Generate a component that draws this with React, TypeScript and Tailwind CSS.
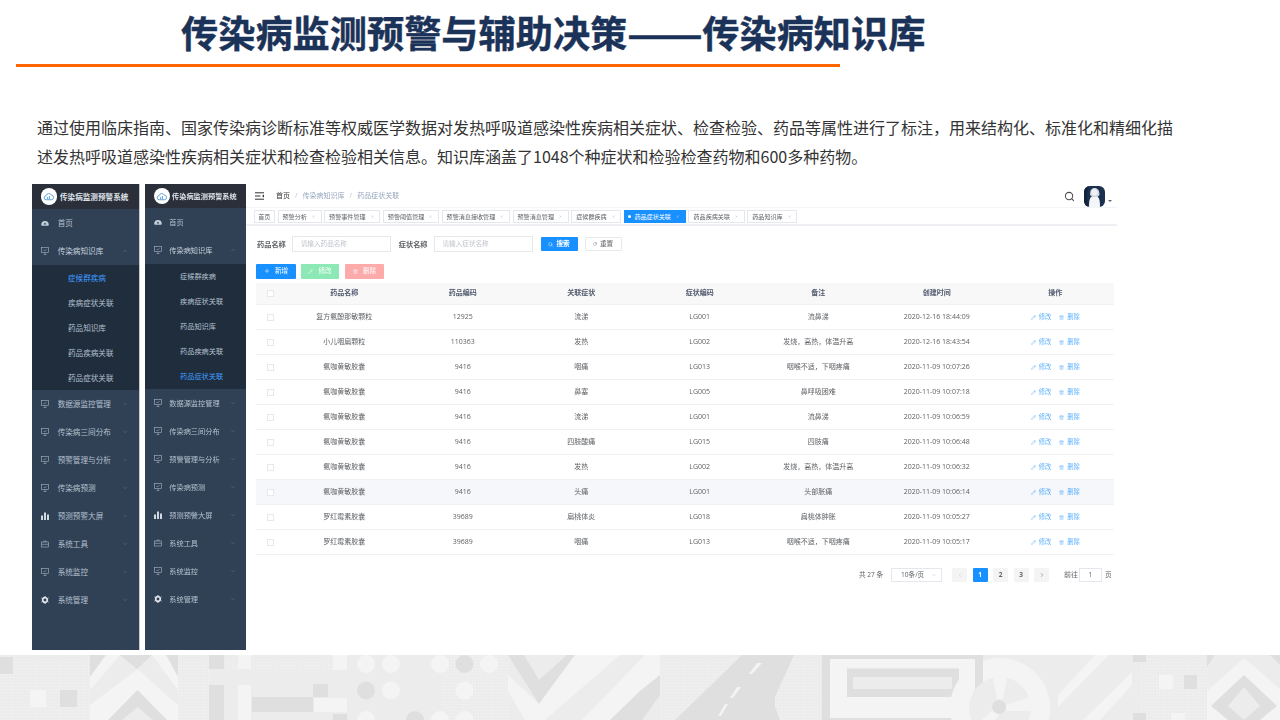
import { ChevronDown, ChevronLeft, ChevronRight, ChevronUp, Pencil, Plus, RotateCw, Search, Trash2, X } from 'lucide-react';

const menuItems = [
  { label: '数据源监控管理', icon: 'monitor' },
  { label: '传染病三间分布', icon: 'monitor' },
  { label: '预警管理与分析', icon: 'monitor' },
  { label: '传染病预测', icon: 'monitor' },
  { label: '预测预警大屏', icon: 'chart' },
  { label: '系统工具', icon: 'tool' },
  { label: '系统监控', icon: 'monitor' },
  { label: '系统管理', icon: 'gear' },
];

const children = ['症候群疾病', '疾病症状关联', '药品知识库', '药品疾病关联', '药品症状关联'];

const tags = ['预警分析', '预警事件管理', '预警阈值管理', '预警消息接收管理', '预警消息管理', '症候群疾病'];

const rows = [
  ['复方氨酚那敏颗粒', '12925', '流涕', 'LG001', '流鼻涕', '2020-12-16 18:44:09'],
  ['小儿咽扁颗粒', '110363', '发热', 'LG002', '发烧，高热，体温升高', '2020-12-16 18:43:54'],
  ['氨咖黄敏胶囊', '9416', '咽痛', 'LG013', '咽喉不适，下咽疼痛', '2020-11-09 10:07:26'],
  ['氨咖黄敏胶囊', '9416', '鼻塞', 'LG005', '鼻呼吸困难', '2020-11-09 10:07:18'],
  ['氨咖黄敏胶囊', '9416', '流涕', 'LG001', '流鼻涕', '2020-11-09 10:06:59'],
  ['氨咖黄敏胶囊', '9416', '四肢酸痛', 'LG015', '四肢痛', '2020-11-09 10:06:48'],
  ['氨咖黄敏胶囊', '9416', '发热', 'LG002', '发烧，高热，体温升高', '2020-11-09 10:06:32'],
  ['氨咖黄敏胶囊', '9416', '头痛', 'LG001', '头部胀痛', '2020-11-09 10:06:14'],
  ['罗红霉素胶囊', '39689', '扁桃体炎', 'LG018', '扁桃体肿胀', '2020-11-09 10:05:27'],
  ['罗红霉素胶囊', '39689', '咽痛', 'LG013', '咽喉不适，下咽疼痛', '2020-11-09 10:05:17'],
];

function MenuIcon({ name }: { name: string }) {
  if (name === 'chart') {
    return (
      <svg width="8" height="8" viewBox="0 0 8 8" fill="#d0d8e2">
        <rect x="0" y="3.500" width="2" height="4.500" />
        <rect x="3" y="0.500" width="2" height="7.500" />
        <rect x="6" y="2.500" width="2" height="5.500" />
      </svg>
    );
  }
  if (name === 'tool') {
    return (
      <svg width="8" height="8" viewBox="0 0 8 8" fill="none" stroke="#aab6c5" strokeWidth="0.6">
        <rect x="0.500" y="2" width="7" height="5" />
        <path d="M2.800 2V1h2.400v1M0.500 4.300h7" />
      </svg>
    );
  }
  if (name === 'gear') {
    return (
      <svg width="8" height="8" viewBox="0 0 8 8" fill="none" stroke="#dfe5ec">
        <circle cx="4" cy="4" r="2.300" strokeWidth="1.700" />
        <path d="M4 0v1M4 7v1M.5 2l.9.5M6.600 5.500l.9.5M.5 6l.9-.5M6.600 2.500l.9-.5" strokeWidth="1" />
      </svg>
    );
  }
  if (name === 'home') {
    return (
      <svg width="8" height="8" viewBox="0 0 8 8" fill="#bfcbd9">
        <path d="M0.200 5.800a3.800 3.800 0 1 1 7.600 0c0 .6-.3.9-.8.9H1c-.5 0-.8-.3-.8-.9z" />
        <circle cx="4" cy="4.800" r="0.900" fill="#304156" />
      </svg>
    );
  }
  return (
    <svg width="8" height="8" viewBox="0 0 8 8" fill="none" stroke="#aab6c5" strokeWidth="0.6">
      <rect x="0.400" y="0.400" width="7.200" height="5.200" />
      <path d="M2.500 7.600h3M4 5.600v2M2.600 3l1 1 1.800-1.800" />
    </svg>
  );
}

function SidebarRow({ icon, label, open, bright, wide }: { icon: string; label: string; open?: boolean; bright?: boolean; wide?: boolean }) {
  return (
    <div className={`flex h-[28px] items-center pl-[9px] ${wide ? 'pr-[11px]' : 'pr-[10px]'}`}>
      <span className={`flex shrink-0 justify-start ${wide ? 'w-[16.700px]' : 'w-[15.300px]'}`}>
        <MenuIcon name={icon} />
      </span>
      <span className={`${wide ? 'text-[7.600px]' : 'text-[7.200px]'} ${bright ? 'text-[#c9d3de]' : 'text-[#b4c0ce]'}`}>{label}</span>
      {open ? (
        <ChevronUp size={6} color="#66758a" className="ml-auto" />
      ) : icon !== 'home' ? (
        <ChevronDown size={6} color="#66758a" className="ml-auto" />
      ) : null}
    </div>
  );
}

function Sidebar({ active, wide }: { active: number; wide?: boolean }) {
  return (
    <div className={`flex h-full flex-col bg-[#304156] ${wide ? 'w-[108px] border-r border-[#c4c9cf]' : 'w-[101px]'}`}>
      <div className={`flex items-center bg-[#2b2f3a] pl-[8.500px] ${wide ? 'h-[25px]' : 'h-[24px]'}`}>
        <span className="flex h-[16.500px] w-[16.500px] items-center justify-center rounded-full bg-white">
          <svg width="12" height="9" viewBox="0 0 13 10" fill="none" stroke="#3f8fd0" strokeWidth="0.9">
            <path d="M3.500 8.600a2.200 2.200 0 0 1-.3-4.400 3.200 3.200 0 0 1 6-.7 2.600 2.600 0 0 1 .5 5.100z" />
            <path d="M5 8V5.500M7 8V4.500" />
          </svg>
        </span>
        <span className={`whitespace-nowrap font-bold text-[#dfe3e8] ${wide ? 'ml-[3px] text-[7.600px]' : 'ml-[2px] text-[7.200px]'}`}>
          传染病监测预警系统
        </span>
      </div>
      <SidebarRow icon="home" label="首页" wide={wide} />
      <SidebarRow icon="monitor" label="传染病知识库" open bright wide={wide} />
      <div className="flex flex-col bg-[#1f2d3d]">
        {children.map((c, i) => (
          <div
            key={c}
            className={`flex h-[25px] items-center ${wide ? 'pl-[36px] text-[7.600px]' : 'pl-[35px] text-[7.200px]'} ${i === active ? 'text-[#409eff]' : 'text-[#b4c0ce]'}`}
          >
            {c}
          </div>
        ))}
      </div>
      {menuItems.map((m) => (
        <SidebarRow key={m.label} icon={m.icon} label={m.label} wide={wide} />
      ))}
    </div>
  );
}

function Tag({ label }: { label: string }) {
  return (
    <div className="flex h-[13px] items-center border border-[#e4e7ed] pl-[4px] pr-[5.700px] text-[6.100px] text-[#606266]">
      {label}
      <X size={3} color="#8a8f98" className="ml-[5px]" />
    </div>
  );
}

function Breadcrumb() {
  return (
    <div className="flex h-[24px] items-center pl-[9px] pr-[5px]">
      <svg width="9" height="8" viewBox="0 0 9 8" stroke="#303133" strokeWidth="1">
        <path d="M0 0.800h9M0 4h5.500M0 7.200h9" />
        <path d="M9 2.400 7 4l2 1.600z" fill="#303133" strokeWidth="0" />
      </svg>
      <span className="ml-[12px] text-[7px] text-[#303133]">首页</span>
      <span className="mx-[5px] text-[7px] text-[#c0c4cc]">/</span>
      <span className="text-[7px] text-[#97a8be]">传染病知识库</span>
      <span className="mx-[5px] text-[7px] text-[#c0c4cc]">/</span>
      <span className="text-[7px] text-[#97a8be]">药品症状关联</span>
      <Search size={11} color="#4a4a4a" strokeWidth={2.200} className="ml-auto" />
      <span className="ml-[9px] flex h-[21px] w-[21px] items-center justify-center overflow-hidden rounded-[6px] bg-[#1c3150]">
        <svg width="21" height="21" viewBox="0 0 21 21">
          <path d="M5 21c0-8 1-11 5.500-11s5.500 3 5.500 11z" fill="#f4f6f8" />
          <path d="M6 9c0-5 1.500-7 4.500-7s5 2 5 7l-2 2h-5z" fill="#cfd6de" />
          <circle cx="10.500" cy="6.500" r="3.200" fill="#eef0f3" />
          <path d="M0 0h5L3 8l1 13H0z" fill="#12233c" />
        </svg>
      </span>
      <span className="ml-[3px] mt-[10px] h-0 w-0 border-x-[2px] border-t-[2px] border-x-transparent border-t-[#606266]" />
    </div>
  );
}

function Tagbar() {
  return (
    <div className="flex h-[18px] items-center gap-[2.500px] border-b-2 border-[#eef0f3] pl-[7.500px] pt-[1px] shadow-[0_-1px_0_#f2f4f7]">
      <div className="flex h-[13px] w-[21.500px] items-center justify-center border border-[#e4e7ed] text-[6.100px] text-[#606266]">首页</div>
      {tags.map((t) => (
        <Tag key={t} label={t} />
      ))}
      <div className="flex h-[13px] items-center bg-[#1890ff] pl-[4px] pr-[7px] text-[6.100px] text-white">
        <span className="mr-[3px] h-[3.500px] w-[3.500px] rounded-full bg-white" />
        药品症状关联
        <X size={3} color="#ffffff" className="ml-[5px]" />
      </div>
      <Tag label="药品疾病关联" />
      <Tag label="药品知识库" />
    </div>
  );
}

function Filters() {
  return (
    <div className="ml-[11px] mt-[10px] flex h-[16px] items-center">
      <span className="text-[7.200px] font-bold text-[#606266]">药品名称</span>
      <span className="ml-[6px] flex h-[16px] w-[99px] items-center border border-[#e6e8eb] pl-[8px] text-[6.600px] text-[#c0c4cc]">
        请输入药品名称
      </span>
      <span className="ml-[8px] text-[7.200px] font-bold text-[#606266]">症状名称</span>
      <span className="ml-[6px] flex h-[16px] w-[99px] items-center border border-[#e6e8eb] pl-[8px] text-[6.600px] text-[#c0c4cc]">
        请输入症状名称
      </span>
      <span className="ml-[8px] flex h-[14px] w-[37px] items-center justify-center gap-[3px] rounded-[1px] bg-[#1890ff] text-[6.600px] font-bold text-white">
        <Search size={5} color="#ffffff" />
        搜索
      </span>
      <span className="ml-[7px] flex h-[14px] w-[37px] items-center justify-center gap-[3px] rounded-[1px] border border-[#e6e8eb] text-[6.600px] text-[#606266]">
        <RotateCw size={4} color="#606266" />
        重置
      </span>
    </div>
  );
}

function Actions() {
  return (
    <div className="ml-[10px] mt-[11.500px] flex h-[15px] items-center">
      <span className="flex h-[15px] w-[40px] items-center justify-center gap-[5px] rounded-[1px] bg-[#1890ff] text-[6.600px] text-white">
        <Plus size={6} color="#ffffff" />
        新增
      </span>
      <span className="ml-[5px] flex h-[15px] w-[38px] items-center justify-center gap-[5px] rounded-[1px] bg-[#8ce8b4] text-[6.600px] text-white">
        <Pencil size={5} color="#ffffff" />
        修改
      </span>
      <span className="ml-[6px] flex h-[15px] w-[39px] items-center justify-center gap-[5px] rounded-[1px] bg-[#fdaaaa] text-[6.600px] text-white">
        <Trash2 size={5} color="#ffffff" />
        删除
      </span>
    </div>
  );
}

function Checkbox() {
  return <span className="h-[7px] w-[7px] border border-[#e6e8eb] bg-white" />;
}

function DrugTable() {
  return (
    <div className="ml-[10px] mt-[4.500px] w-[858px] text-[7px]">
      <div className="grid h-[22px] grid-cols-[29px_repeat(7,118.500px)] items-center border-b border-[#f0f1f4] bg-[#f8f8f9] text-center font-bold text-[#515a6e]">
        <span className="flex justify-center">
          <Checkbox />
        </span>
        {['药品名称', '药品编码', '关联症状', '症状编码', '备注', '创建时间', '操作'].map((h) => (
          <span key={h}>{h}</span>
        ))}
      </div>
      {rows.map((r, i) => (
        <div
          key={i}
          className={`grid h-[25px] grid-cols-[29px_repeat(7,118.500px)] items-center border-b border-[#f0f1f4] text-center text-[#606266] ${i === 7 ? 'bg-[#f5f7fa]' : ''}`}
        >
          <span className="flex justify-center">
            <Checkbox />
          </span>
          {r.map((c, j) => (
            <span key={j}>{c}</span>
          ))}
          <span className="flex items-center justify-center gap-[8px] text-[6.300px] text-[#1890ff] opacity-70">
            <span className="flex items-center gap-[3px]">
              <Pencil size={5} color="#1890ff" />
              修改
            </span>
            <span className="flex items-center gap-[3px]">
              <Trash2 size={5} color="#1890ff" />
              删除
            </span>
          </span>
        </div>
      ))}
    </div>
  );
}

function Pagination() {
  const page = 'flex h-[14px] w-[15px] items-center justify-center rounded-[1px] text-[6.500px] font-bold';
  return (
    <div className="mt-[13px] flex h-[14px] items-center pl-[613px] text-[6.600px] text-[#606266]">
      <span className="w-[32px]">共 27 条</span>
      <span className="flex h-[14px] w-[51px] items-center justify-between border border-[#e4e7ed] pl-[9px] pr-[4px]">
        10条/页
        <ChevronDown size={6} color="#c0c4cc" />
      </span>
      <span className="ml-[10px] flex gap-[5.500px]">
        <span className={`${page} bg-[#f4f4f5]`}>
          <ChevronLeft size={6} color="#c0c4cc" />
        </span>
        <span className={`${page} bg-[#1890ff] text-white`}>1</span>
        <span className={`${page} bg-[#f4f4f5]`}>2</span>
        <span className={`${page} bg-[#f4f4f5]`}>3</span>
        <span className={`${page} bg-[#f4f4f5]`}>
          <ChevronRight size={6} color="#606266" />
        </span>
      </span>
      <span className="ml-[15px] text-[7px]">前往</span>
      <span className="ml-[1px] flex h-[14px] w-[23px] items-center justify-center border border-[#e4e7ed]">1</span>
      <span className="ml-[3px]">页</span>
    </div>
  );
}

function Footer() {
  const dark = '#dfdfdf';
  const light = '#f4f4f4';
  const base = '#ececec';
  return (
    <svg width="1280" height="65" viewBox="0 0 1280 65" className="block">
      <defs>
        <pattern id="dots" width="3" height="3" patternUnits="userSpaceOnUse">
          <circle cx="1.500" cy="1.500" r="0.700" fill="#f4f4f4" />
        </pattern>
      </defs>
      <rect width="1280" height="65" fill={base} />
      <rect x="0" y="3" width="210" height="62" fill="url(#dots)" opacity="0.7" />
      <rect x="225" y="4" width="120" height="12" fill="url(#dots)" opacity="0.7" />
      <rect x="440" y="0" width="70" height="65" fill="url(#dots)" opacity="0.7" />
      <rect x="660" y="3" width="160" height="62" fill="url(#dots)" opacity="0.7" />
      <rect x="1140" y="3" width="70" height="62" fill="url(#dots)" opacity="0.7" />
      <rect x="0" y="2" width="13" height="17" fill={dark} />
      <rect x="30" y="35" width="16" height="17" fill={light} />
      <rect x="60" y="35" width="17" height="17" fill={dark} />

      <polygon points="90,0 178,0 178,65 90,65" fill={base} />
      <polygon points="90,0 106,0 90,22" fill={dark} />
      <polygon points="178,0 166,0 178,22" fill={dark} />
      <polygon points="106,0 120,0 90,35 90,22" fill={light} />
      <polygon points="166,0 152,0 178,35 178,22" fill={light} />
      <polygon points="120,0 152,0 137,14" fill={dark} />
      <polygon points="137.500,14 178,50 178,65 90,65 90,50" fill={light} />
      <polygon points="137.500,35 167,65 108,65" fill={dark} />
      <polygon points="137.500,52 153,65 122,65" fill={base} />

      <rect x="209" y="0" width="15" height="14" fill={dark} />
      <rect x="209" y="30" width="15" height="35" fill={dark} />
      <rect x="238" y="0" width="13" height="14" fill={light} />
      <rect x="238" y="30" width="13" height="35" fill={light} />
      <rect x="252" y="42" width="61" height="15" fill={dark} />
      <rect x="313" y="29" width="15" height="13" fill={dark} />
      <rect x="314" y="43" width="33" height="14" fill={light} />
      <rect x="333" y="0" width="14" height="15" fill={light} />
      <rect x="333" y="59" width="14" height="6" fill={dark} />

      <ellipse cx="366" cy="9" rx="9" ry="9" fill={light} />
      <ellipse cx="391" cy="9" rx="9" ry="9" fill={light} />
      <ellipse cx="440" cy="9" rx="9" ry="9" fill={light} />
      <ellipse cx="464.500" cy="9" rx="9" ry="9" fill={dark} />
      <ellipse cx="489" cy="9" rx="9" ry="9" fill={light} />
      <ellipse cx="366" cy="35.500" rx="9" ry="9" fill={dark} />
      <ellipse cx="391" cy="35.500" rx="9" ry="9" fill={light} />
      <ellipse cx="464.500" cy="35.500" rx="9" ry="9" fill={light} />
      <ellipse cx="366" cy="65" rx="9" ry="9" fill={light} />
      <ellipse cx="415" cy="65" rx="9" ry="9" fill={dark} />
      <ellipse cx="440" cy="65" rx="9" ry="9" fill={light} />
      <ellipse cx="464.500" cy="65" rx="9" ry="9" fill={light} />

      <polygon points="508,0 524,0 539,25 567,0 575,0 539,49 508,0" fill={dark} />
      <polygon points="508,20 539,49 575,0 620,0 545,65 525,65 508,36" fill={light} />
      <polygon points="620,0 645,0 582,65 560,65" fill={base} />
      <polygon points="645,0 660,0 660,30 625,65 582,65" fill={light} />
      <polygon points="640,36 660,20 660,40 642,65 610,65" fill={dark} />

      <polygon points="675,65 742,0 794,0 775,42 775,52 780,65" fill={dark} />
      <polygon points="757,8 762,8 752,19 749,19" fill={light} />
      <polygon points="737,32 741,32 733,43 730,43" fill={light} />
      <polygon points="725,49 728,49 721,61 718,61" fill={light} />

      <rect x="822" y="0" width="161" height="65" fill={dark} />
      <rect x="830" y="4" width="145" height="59" fill={light} />
      <rect x="847" y="13.500" width="112" height="28.500" fill={dark} />
      <rect x="853" y="22" width="99" height="12" fill={base} />

      <circle cx="1000" cy="53" r="50" fill={light} />
      <rect x="975" y="0" width="8" height="65" fill={dark} />
      <circle cx="1000" cy="53" r="31" fill={base} />
      <polygon points="993,22 1007,22 1003,44 997,44" fill={light} />
      <polygon points="1030,42 1031,56 1006,56 1006,50" fill={light} />
      <polygon points="976,70 988,76 1000,58 994,54" fill={light} />
      <circle cx="999" cy="52" r="7" fill={dark} />

      <polygon points="1058,40 1095,0 1109,0 1058,52" fill={light} />
      <polygon points="1083,65 1132,17 1132,30 1100,65" fill={light} />
      <rect x="1133" y="0" width="13" height="7" fill={dark} />
      <rect x="1133" y="58" width="13" height="7" fill={dark} />
      <rect x="1159" y="20" width="14" height="14" fill={light} />
      <rect x="1184" y="20" width="13" height="14" fill={dark} />
      <rect x="1171" y="58" width="14" height="7" fill={light} />

      <polygon points="1207,0 1215,0 1207,12" fill={dark} />
      <polygon points="1270,0 1280,0 1280,10" fill={dark} />
      <polygon points="1244,3 1280,34 1280,65 1207,65 1207,36" fill={light} />
      <polygon points="1244,20 1277,51 1260,65 1228,65 1211,51" fill={dark} />
      <polygon points="1244,32 1260,51 1244,65 1228,51" fill={base} />
    </svg>
  );
}

export default function App() {
  return (
    <div className="h-[720px] w-[1280px] overflow-hidden bg-white font-['Noto_Sans_CJK_SC','Noto_Sans',sans-serif]">
      <h1 className="h-[64px] whitespace-nowrap pl-[181px] text-[37.200px] font-bold leading-[64px] text-[#1b3358] [-webkit-text-stroke:0.4px_#1b3358]">
        传染病监测预警与辅助决策
        <span className="inline-block w-[75px] origin-left scale-x-[1.200]">——</span>
        传染病知识库
      </h1>
      <div className="ml-[16px] h-[3px] w-[824px] bg-[#ff6600]" />
      <p className="ml-[37px] mt-[45.500px] whitespace-nowrap text-[16px] leading-[29px] text-[#333333]">
        通过使用临床指南、国家传染病诊断标准等权威医学数据对发热呼吸道感染性疾病相关症状、检查检验、药品等属性进行了标注，用来结构化、标准化和精细化描
        <br />
        述发热呼吸道感染性疾病相关症状和检查检验相关信息。知识库涵盖了1048个种症状和检验检查药物和600多种药物。
      </p>
      <div className="ml-[32px] mt-[13.500px] flex h-[466px] blur-[0.45px]">
        <Sidebar active={0} wide />
        <div className="w-[5px]" />
        <Sidebar active={4} />
        <div className="w-[871px] font-['Open_Sans','Noto_Sans_CJK_SC',sans-serif]">
          <Breadcrumb />
          <Tagbar />
          <Filters />
          <Actions />
          <DrugTable />
          <Pagination />
        </div>
      </div>
      <div className="mt-[5px]">
        <Footer />
      </div>
    </div>
  );
}
